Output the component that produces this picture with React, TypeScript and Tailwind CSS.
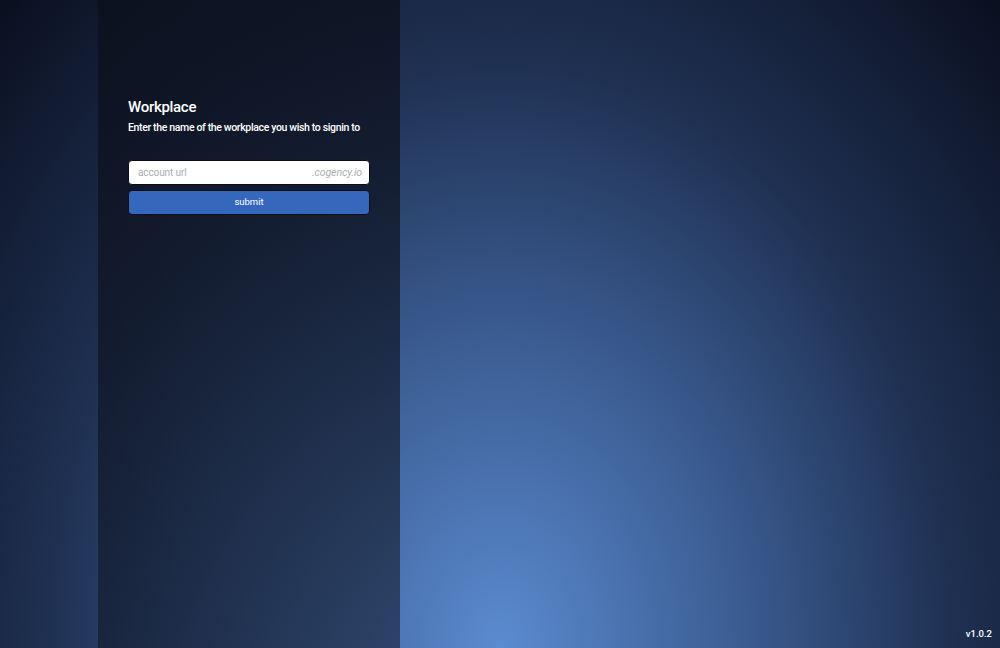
import { useState } from 'react';

export default function App() {
  const [account, setAccount] = useState('');

  return (
    <div
      className="relative flex h-[648px] w-full overflow-hidden bg-[radial-gradient(ellipse_at_bottom,#5b8bd0_0%,#3a5b90_35%,#1e2f50_65%,#0a0f1f_100%)]"
      style={{ fontFamily: 'Roboto, "Liberation Sans", Arial, sans-serif' }}
    >
      <div className="ml-[98px] flex w-[302px] flex-col bg-linear-to-b from-[#0b0f1a]/75 to-[#0b0f1a]/50 px-[30px] pt-[97px]">
        <h1 className="text-[15px] font-medium leading-[20px] tracking-[-0.3px] text-white">Workplace</h1>
        <p className="mt-[4px] whitespace-nowrap text-[10.5px] font-medium leading-[14px] tracking-[-0.35px] text-white">
          Enter the name of the workplace you wish to signin to
        </p>

        <form className="mt-[25px] flex flex-col gap-[5px]" onSubmit={(e) => e.preventDefault()}>
          <div className="flex h-[25px] items-center rounded-[4px] border border-[#0a0e18] bg-white pl-[9px] pr-[7px]">
            <input
              value={account}
              onChange={(e) => setAccount(e.target.value)}
              placeholder="account url"
              className="min-w-0 flex-1 bg-transparent text-[10px] tracking-[-0.1px] text-gray-800 outline-none placeholder:text-[#a9adb4]"
            />
            <span className="text-[10.5px] italic tracking-[-0.1px] text-[#a9adb4]">.cogency.io</span>
          </div>
          <button
            type="submit"
            className="h-[25px] rounded-[4px] border border-[#0a0e18] bg-[#3568bd] text-[9.5px] text-white"
          >
            submit
          </button>
        </form>
      </div>

      <span className="absolute bottom-[7px] right-[8px] text-[9.5px] font-medium text-white">v1.0.2</span>
    </div>
  );
}
